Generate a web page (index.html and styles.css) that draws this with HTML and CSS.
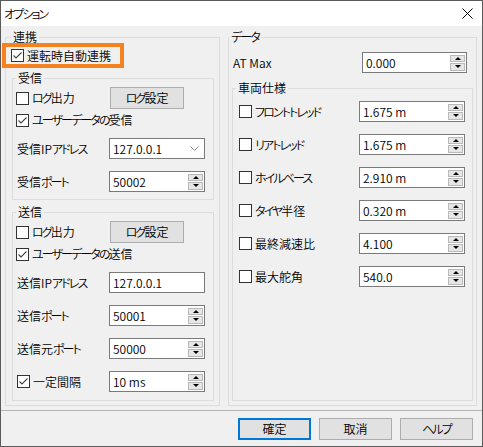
FILE: index.html
```html
<!DOCTYPE html>
<html lang="ja">
<head>
<meta charset="utf-8">
<title>オプション</title>
<link rel="stylesheet" href="styles.css">
</head>
<body>
<div class="window">
  <div class="titlebar">
    <span class="title"><span class="k">オプション</span></span>
    <svg class="close" width="11" height="11" viewBox="0 0 11 11"><path d="M0.5 0.5 L10.5 10.5 M10.5 0.5 L0.5 10.5" stroke="#000" stroke-width="1" fill="none"/></svg>
  </div>
  <div class="main">
    <fieldset class="group g-link">
      <legend class="lg-link">連携</legend>
      <div class="body link-body">
        <div class="check-row highlight"><span class="cb"><svg width="11" height="11" viewBox="0 0 11 11"><path d="M1.5 5.5 L4 8 L9.5 2.5" stroke="#444" stroke-width="1.1" fill="none"/></svg></span><span class="cl">運転時自動連携</span></div>

        <fieldset class="group sub g-recv">
          <legend class="lg-sub">受信</legend>
          <div class="body sub-body">
            <div class="row r-btn">
              <div class="cpart"><span class="cb"></span><span class="cl"><span class="k">ログ</span>出力</span></div>
              <button class="btn logbtn"><span class="k">ログ</span>設定</button>
            </div>
            <div class="row r-check">
              <div class="cpart wide"><span class="cb"><svg width="11" height="11" viewBox="0 0 11 11"><path d="M1.5 5.5 L4 8 L9.5 2.5" stroke="#444" stroke-width="1.1" fill="none"/></svg></span><span class="cl"><span class="k">ユーザーデータの</span>受信</span></div>
            </div>
            <div class="row r-field first">
              <span class="lab">受信IP<span class="k">アドレス</span></span>
              <div class="input combo"><span class="val">127.0.0.1</span><svg class="chev" width="9" height="5" viewBox="0 0 9 5"><path d="M0.5 0.5 L4.5 4.5 L8.5 0.5" stroke="#8a8a8a" stroke-width="1" fill="none"/></svg></div>
            </div>
            <div class="row r-field">
              <span class="lab">受信<span class="k">ポート</span></span>
              <div class="input"><span class="val">50002</span><span class="spin"><span class="sb up"></span><span class="sb down"></span></span></div>
            </div>
          </div>
        </fieldset>

        <fieldset class="group sub g-send">
          <legend class="lg-sub">送信</legend>
          <div class="body sub-body">
            <div class="row r-btn">
              <div class="cpart"><span class="cb"></span><span class="cl"><span class="k">ログ</span>出力</span></div>
              <button class="btn logbtn"><span class="k">ログ</span>設定</button>
            </div>
            <div class="row r-check">
              <div class="cpart wide"><span class="cb"><svg width="11" height="11" viewBox="0 0 11 11"><path d="M1.5 5.5 L4 8 L9.5 2.5" stroke="#444" stroke-width="1.1" fill="none"/></svg></span><span class="cl"><span class="k">ユーザーデータの</span>送信</span></div>
            </div>
            <div class="row r-field first">
              <span class="lab">送信IP<span class="k">アドレス</span></span>
              <div class="input"><span class="val">127.0.0.1</span></div>
            </div>
            <div class="row r-field">
              <span class="lab">送信<span class="k">ポート</span></span>
              <div class="input"><span class="val">50001</span><span class="spin"><span class="sb up"></span><span class="sb down"></span></span></div>
            </div>
            <div class="row r-field">
              <span class="lab">送信元<span class="k">ポート</span></span>
              <div class="input"><span class="val">50000</span><span class="spin"><span class="sb up"></span><span class="sb down"></span></span></div>
            </div>
            <div class="row r-field">
              <div class="cpart lab-c"><span class="cb"><svg width="11" height="11" viewBox="0 0 11 11"><path d="M1.5 5.5 L4 8 L9.5 2.5" stroke="#444" stroke-width="1.1" fill="none"/></svg></span><span class="cl">一定間隔</span></div>
              <div class="input"><span class="val">10 ms</span><span class="spin"><span class="sb up"></span><span class="sb down"></span></span></div>
            </div>
          </div>
        </fieldset>
      </div>
    </fieldset>

    <fieldset class="group g-data">
      <legend class="lg-data"><span class="k">データ</span></legend>
      <div class="body data-body">
        <div class="row r-field">
          <span class="lab at">AT Max</span>
          <div class="input w105"><span class="val">0.000</span><span class="spin"><span class="sb up"></span><span class="sb down"></span></span></div>
        </div>
        <fieldset class="group g-car">
          <legend class="lg-car">車両仕様</legend>
          <div class="body car-body">
            <div class="row r-field first">
              <div class="cpart car-c"><span class="cb"></span><span class="cl"><span class="k">フロントトレッド</span></span></div>
              <div class="input w106"><span class="val">1.675 m</span><span class="spin"><span class="sb up"></span><span class="sb down"></span></span></div>
            </div>
            <div class="row r-field">
              <div class="cpart car-c"><span class="cb"></span><span class="cl"><span class="k">リアトレッド</span></span></div>
              <div class="input w106"><span class="val">1.675 m</span><span class="spin"><span class="sb up"></span><span class="sb down"></span></span></div>
            </div>
            <div class="row r-field">
              <div class="cpart car-c"><span class="cb"></span><span class="cl"><span class="k">ホイルベース</span></span></div>
              <div class="input w106"><span class="val">2.910 m</span><span class="spin"><span class="sb up"></span><span class="sb down"></span></span></div>
            </div>
            <div class="row r-field">
              <div class="cpart car-c"><span class="cb"></span><span class="cl"><span class="k">タイヤ</span>半径</span></div>
              <div class="input w106"><span class="val">0.320 m</span><span class="spin"><span class="sb up"></span><span class="sb down"></span></span></div>
            </div>
            <div class="row r-field">
              <div class="cpart car-c"><span class="cb"></span><span class="cl">最終減速比</span></div>
              <div class="input w106"><span class="val">4.100</span><span class="spin"><span class="sb up"></span><span class="sb down"></span></span></div>
            </div>
            <div class="row r-field">
              <div class="cpart car-c"><span class="cb"></span><span class="cl">最大舵角</span></div>
              <div class="input w106"><span class="val">540.0</span><span class="spin"><span class="sb up"></span><span class="sb down"></span></span></div>
            </div>
          </div>
        </fieldset>
      </div>
    </fieldset>
  </div>
  <div class="bar">
    <button class="btn dbtn default">確定</button>
    <button class="btn dbtn">取消</button>
    <button class="btn dbtn"><span class="k">ヘルプ</span></button>
  </div>
</div>
</body>
</html>
```

FILE: styles.css
```css
* { box-sizing: border-box; }
html, body { margin: 0; padding: 0; }
body {
  font-family: "Noto Sans CJK JP", "Noto Sans", sans-serif;
  font-size: 12px;
  font-weight: 350;
  line-height: 14px;
  color: #000;
  font-feature-settings: "palt" 1;
  background: #fff;
}
.k { letter-spacing: -1.9px; font-feature-settings: "palt" 1; }
.window {
  width: 483px;
  height: 447px;
  border: 1px solid #5a5a5a;
  background: #f0f0f0;
  display: flex;
  flex-direction: column;
}
.titlebar {
  height: 25px;
  flex: none;
  background: #fff;
  display: flex;
  align-items: center;
  justify-content: space-between;
  padding: 0 9px 0 3px;
}
.close { display: block; }

.main {
  height: 385px;
  flex: none;
  display: flex;
  gap: 8px;
  padding: 4px 5px 4px 4px;
  border-bottom: 1px solid #b4b4b4;
}

.group {
  margin: 0;
  padding: 0;
  border: 1px solid #dcdcdc;
  min-width: 0;
  display: flex;
  flex-direction: column;
}
legend {
  padding: 0 2px;
  line-height: 14px;
  height: 14px;
}
.lg-link { margin-left: 5px; }
.lg-sub { margin-left: 3px; }
.lg-data { margin-left: 0; }
.lg-car { margin-left: 3px; }

.body { display: flex; flex-direction: column; }

.g-link { width: 215px; }
.link-body { flex: 1; padding: 3px 5px 4px 0; }

.highlight {
  align-self: flex-start;
  width: 114px;
  height: 17px;
  padding-left: 5px;
  outline: 4px solid #f5821f;
}
.check-row { display: flex; align-items: center; }

.sub { margin-left: 6px; width: 202px; }
.g-recv { margin-top: 7px; }
.g-send { margin-top: 5px; flex: 1; }
.sub-body { padding: 2px 0 7px 0; }

.row { display: flex; align-items: center; }
.r-btn { height: 22px; }
.r-check { height: 16px; margin-top: 3px; }
.r-field { height: 21px; margin-top: 12px; }
.r-field.first { margin-top: 10px; }

.cpart { display: flex; align-items: center; width: 97px; padding-left: 3px; }
.cpart.wide { width: auto; }
.cpart.lab-c { width: 96px; padding-left: 4px; }
.car-c { width: 126px; padding-left: 6px; }

.cb {
  width: 13px;
  height: 13px;
  flex: none;
  border: 1px solid #333;
  background: #fff;
  display: flex;
  align-items: center;
  justify-content: center;
}
.cb svg { display: block; }
.cl { margin-left: 3px; white-space: nowrap; }

.lab { width: 96px; padding-left: 4px; white-space: nowrap; }
.lab.at { width: 133px; }

.input {
  width: 96px;
  height: 21px;
  border: 1px solid #7a7a7a;
  background: #fff;
  display: flex;
  align-items: center;
  padding-left: 3px;
}
.w105 { width: 105px; }
.w106 { width: 106px; }
.val { flex: 1; white-space: nowrap; }
.chev { margin-right: 5px; display: block; }

.spin {
  width: 15px;
  height: 16px;
  margin-right: 1px;
  display: flex;
  flex-direction: column;
  gap: 1px;
}
.sb {
  flex: 1;
  border: 1px solid #b9b9b9;
  background: #e6e6e6;
  display: flex;
  align-items: center;
  justify-content: center;
}
.sb::after {
  content: "";
  width: 0;
  height: 0;
  border-left: 3px solid transparent;
  border-right: 3px solid transparent;
}
.sb.up::after { border-bottom: 3px solid #000; }
.sb.down::after { border-top: 3px solid #000; }

.btn {
  font: inherit;
  font-feature-settings: "palt" 1;
  color: #000;
  height: 22px;
  border: 1px solid #adadad;
  background: #e1e1e1;
  padding: 0;
  margin: 0;
}
.logbtn { width: 74px; }

.g-data { width: 249px; }
.data-body { flex: 1; padding: 8px 0 4px 0; }
.data-body > .r-field { margin-top: 0; }
.g-car { margin-left: 3px; width: 241px; margin-top: 8px; flex: 1; }
.car-body { padding-top: 6px; }
.car-body > .r-field.first { margin-top: 0; }

.bar {
  flex: 1;
  display: flex;
  justify-content: flex-end;
  align-items: flex-start;
  gap: 8px;
  padding: 7px 9px 0 0;
}
.dbtn { width: 73px; }
.dbtn.default { border: 2px solid #0078d7; }
```
